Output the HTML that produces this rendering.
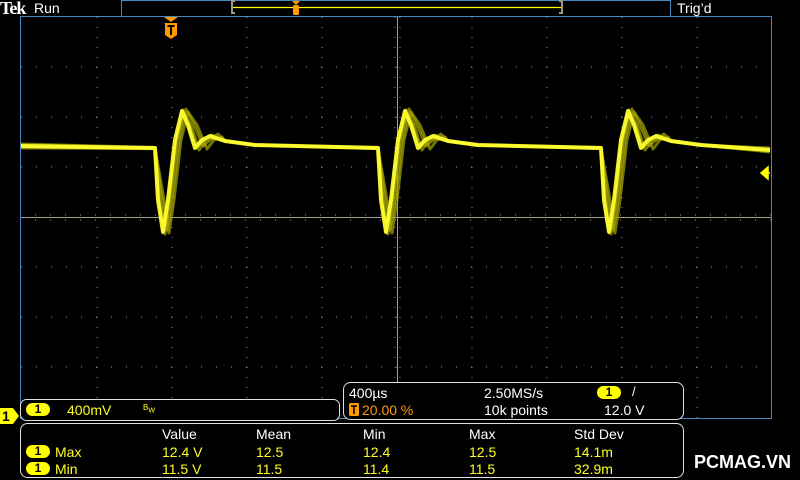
<!DOCTYPE html>
<html><head><meta charset="utf-8"><style>
body{margin:0;width:800px;height:480px;background:#000;overflow:hidden;position:relative;font-family:"Liberation Sans",sans-serif;font-size:13px;color:#fff}
.t{position:absolute;white-space:nowrap;line-height:14px}
.y{color:#ffff20}
.o{color:#ff9a00}
.pill{position:absolute;width:24px;height:13px;border-radius:7px;background:#ffff00;color:#000;font-weight:bold;font-size:12px;text-align:center;line-height:13px}
</style></head><body>
<svg width="800" height="480" style="position:absolute;left:0;top:0">
<g id="grid" stroke="#a09880" stroke-width="1"></g>
<line x1="20" y1="217.5" x2="771" y2="217.5" stroke="#a89e8a"/>
<line x1="397.5" y1="17" x2="397.5" y2="418" stroke="#a89e8a"/>
<g id="wave" fill="none" stroke-linejoin="round"></g>
<rect x="20.5" y="16.5" width="751" height="402" fill="none" stroke="#4a86c0"/>
<rect x="121.5" y="0.5" width="549" height="16" fill="#000" stroke="#4a86c0"/>
<path d="M235 1 H232 V13 H235 M559 1 H562 V13 H559" fill="none" stroke="#a09880" stroke-width="2"/>
<line x1="233" y1="7.5" x2="561" y2="7.5" stroke="#ffff00" stroke-width="1.2"/>
<path d="M292 1 H300 L296 5 Z" fill="#ff9a00"/>
<rect x="293" y="5" width="6" height="10" rx="1.5" fill="#ff9a00"/>
<path d="M164 17 H178 L171 22 Z" fill="#ff9a00"/>
<path d="M165 23 H177 V35 L171 39 L165 35 Z" fill="#ff9a00"/>
<path d="M167.5 26 H174.5 M171 26 V35" stroke="#000" stroke-width="2"/>
<path d="M770 173 L762 173 M768 167 L761 173 L768 179 Z" fill="#ffff00" stroke="#ffff00" stroke-width="1.5"/>
<rect x="20.5" y="399.5" width="319" height="21" rx="6" fill="#000" stroke="#e0e0e0"/>
<rect x="343.5" y="382.5" width="340" height="37" rx="7" fill="#000" stroke="#e0e0e0"/>
<rect x="20.5" y="423.5" width="663" height="54" rx="7" fill="#000" stroke="#e0e0e0"/>
<path d="M0 408 H13 L19 416 L13 424 H0 Z" fill="#ffff00"/>
<rect x="349" y="403" width="10" height="13" rx="1.5" fill="#ff9a00"/>
<path d="M351 406 H357 M354 406 V414" stroke="#000" stroke-width="1.6"/>
</svg>
<div class="t" style="left:0;top:0;font-family:'Liberation Serif',serif;font-weight:bold;font-size:18px;letter-spacing:-1px;line-height:16px">Tek</div>
<div class="t" style="top:1px;left:34px;font-size:14px">Run</div>
<div class="t" style="left:677px;top:1px;font-size:14px">Trig’d</div>
<div class="t" style="left:2px;top:409px;color:#000;font-weight:bold;font-size:14px">1</div>
<div class="pill" style="left:26px;top:403px">1</div>
<div class="t y" style="left:67px;top:403px;font-size:14px">400mV</div>
<div class="t y" style="left:143px;top:404px;font-size:8px;line-height:8px">B<sub style="font-size:7px">W</sub></div>
<div class="t" style="left:349px;top:386px;font-size:14px">400µs</div>
<div class="t o" style="left:362px;top:403px;font-size:14px">20.00 %</div>
<div class="t" style="left:484px;top:386px;font-size:14px">2.50MS/s</div>
<div class="t" style="left:484px;top:403px;font-size:14px">10k points</div>
<div class="pill" style="left:597px;top:386px">1</div>
<div class="t" style="left:632px;top:385px">/</div>
<div class="t" style="left:604px;top:403px;font-size:14px">12.0 V</div>
<div class="t" style="left:162px;top:427px;font-size:14px">Value</div>
<div class="t" style="left:256px;top:427px;font-size:14px">Mean</div>
<div class="t" style="left:363px;top:427px;font-size:14px">Min</div>
<div class="t" style="left:469px;top:427px;font-size:14px">Max</div>
<div class="t" style="left:574px;top:427px;font-size:14px">Std Dev</div>
<div class="pill" style="left:26px;top:445px">1</div>
<div class="t y" style="left:55px;top:445px;font-size:14px">Max</div>
<div class="t y" style="left:162px;top:445px;font-size:14px">12.4 V</div>
<div class="t y" style="left:256px;top:445px;font-size:14px">12.5</div>
<div class="t y" style="left:363px;top:445px;font-size:14px">12.4</div>
<div class="t y" style="left:469px;top:445px;font-size:14px">12.5</div>
<div class="t y" style="left:574px;top:445px;font-size:14px">14.1m</div>
<div class="pill" style="left:26px;top:462px">1</div>
<div class="t y" style="left:55px;top:462px;font-size:14px">Min</div>
<div class="t y" style="left:162px;top:462px;font-size:14px">11.5 V</div>
<div class="t y" style="left:256px;top:462px;font-size:14px">11.5</div>
<div class="t y" style="left:363px;top:462px;font-size:14px">11.4</div>
<div class="t y" style="left:469px;top:462px;font-size:14px">11.5</div>
<div class="t y" style="left:574px;top:462px;font-size:14px">32.9m</div>
<div class="t" style="left:694px;top:453px;font-weight:bold;font-size:18px;line-height:18px">PCMAG.VN</div>
<script>
var g=document.getElementById('grid'),s='';
for(var i=0;i<11;i++){var x=22+75*i;if(i==5||i==10||i==0)continue;s+='<line x1="'+x+'" y1="17" x2="'+x+'" y2="418" stroke-dasharray="1 9"/>';}
for(var j=1;j<8;j++){var y=17+50*j;if(j==4)continue;s+='<line x1="21" y1="'+y+'" x2="770" y2="'+y+'" stroke-dasharray="1 14"/>';}
s+='<line x1="20" y1="215" x2="771" y2="215" stroke-dasharray="1 14"/><line x1="20" y1="220" x2="771" y2="220" stroke-dasharray="1 14"/>';
s+='<line x1="395" y1="17" x2="395" y2="418" stroke-dasharray="1 9"/><line x1="400" y1="17" x2="400" y2="418" stroke-dasharray="1 9"/>';
g.innerHTML=s;
function pulse(p,d,a){var b=148+d*0.3;return [[p,b],[p+3+a,200],[p+8+a,232+d],[p+13+a,200],[p+20+a,140],[p+27+a,111+d],[p+33+a*1.5,125],[p+40+a*2,148+d],[p+47+a*2,140],[p+55+a*2,136+d],[p+70,141],[p+100,145]];}
var w='';
var offs=[[2,1,2],[-2,-1,4],[1,2,6],[-1,-2,1],[0,0,0]];
offs.forEach(function(o,k){var d=o[0],a=o[2];var pts=[[20,146+d]];
[155,378,601].forEach(function(p){pts=pts.concat(pulse(p,d,a));});
pts.push([770,150+d]);
var str=pts.map(function(q){return q[0]+','+q[1]}).join(' ');
var main=(k==4);
w+='<polyline points="'+str+'" stroke="'+(main?'#ffff30':'#a8a800')+'" stroke-width="'+(main?4:3)+'" opacity="'+(main?0.95:0.7)+'"/>';});
document.getElementById('wave').innerHTML=w;
</script>
</body></html>
